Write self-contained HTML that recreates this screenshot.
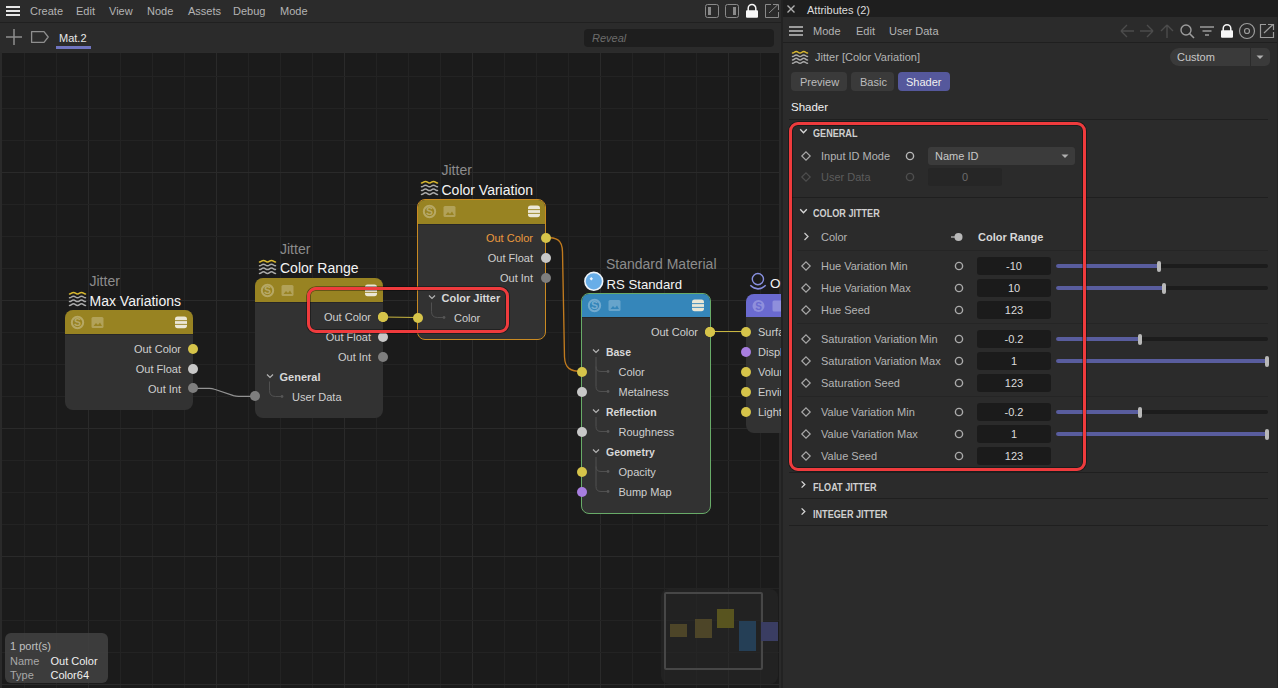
<!DOCTYPE html>
<html><head><meta charset="utf-8"><style>
html,body{margin:0;padding:0;width:1278px;height:688px;overflow:hidden;background:#1b1b1b;}
body{position:relative;font-family:"Liberation Sans", sans-serif;}
.r{position:absolute;}
.t{position:absolute;white-space:nowrap;}
svg.r{overflow:visible}
</style></head><body>
<div class="r" style="left:0px;top:0px;width:781px;height:22px;background:#2b2b2b;"></div>
<div class="r" style="left:0px;top:22px;width:781px;height:1px;background:#202020;"></div>
<div class="r" style="left:0px;top:23px;width:781px;height:29px;background:#2b2b2b;"></div>
<div class="r" style="left:0px;top:52px;width:781px;height:636px;background:#1b1b1b;"></div>
<div class="r" style="left:24px;top:53px;width:1px;height:635px;background:#232323"></div><div class="r" style="left:56px;top:53px;width:1px;height:635px;background:#232323"></div><div class="r" style="left:88px;top:53px;width:1px;height:635px;background:#2a2a2a"></div><div class="r" style="left:120px;top:53px;width:1px;height:635px;background:#232323"></div><div class="r" style="left:152px;top:53px;width:1px;height:635px;background:#232323"></div><div class="r" style="left:184px;top:53px;width:1px;height:635px;background:#232323"></div><div class="r" style="left:216px;top:53px;width:1px;height:635px;background:#2a2a2a"></div><div class="r" style="left:248px;top:53px;width:1px;height:635px;background:#232323"></div><div class="r" style="left:280px;top:53px;width:1px;height:635px;background:#232323"></div><div class="r" style="left:312px;top:53px;width:1px;height:635px;background:#232323"></div><div class="r" style="left:344px;top:53px;width:1px;height:635px;background:#2a2a2a"></div><div class="r" style="left:376px;top:53px;width:1px;height:635px;background:#232323"></div><div class="r" style="left:408px;top:53px;width:1px;height:635px;background:#232323"></div><div class="r" style="left:440px;top:53px;width:1px;height:635px;background:#232323"></div><div class="r" style="left:472px;top:53px;width:1px;height:635px;background:#2a2a2a"></div><div class="r" style="left:504px;top:53px;width:1px;height:635px;background:#232323"></div><div class="r" style="left:536px;top:53px;width:1px;height:635px;background:#232323"></div><div class="r" style="left:568px;top:53px;width:1px;height:635px;background:#232323"></div><div class="r" style="left:600px;top:53px;width:1px;height:635px;background:#2a2a2a"></div><div class="r" style="left:632px;top:53px;width:1px;height:635px;background:#232323"></div><div class="r" style="left:664px;top:53px;width:1px;height:635px;background:#232323"></div><div class="r" style="left:696px;top:53px;width:1px;height:635px;background:#232323"></div><div class="r" style="left:728px;top:53px;width:1px;height:635px;background:#2a2a2a"></div><div class="r" style="left:760px;top:53px;width:1px;height:635px;background:#232323"></div><div class="r" style="left:0;top:76px;width:779px;height:1px;background:#232323"></div><div class="r" style="left:0;top:108px;width:779px;height:1px;background:#232323"></div><div class="r" style="left:0;top:140px;width:779px;height:1px;background:#232323"></div><div class="r" style="left:0;top:172px;width:779px;height:1px;background:#2a2a2a"></div><div class="r" style="left:0;top:204px;width:779px;height:1px;background:#232323"></div><div class="r" style="left:0;top:236px;width:779px;height:1px;background:#232323"></div><div class="r" style="left:0;top:268px;width:779px;height:1px;background:#232323"></div><div class="r" style="left:0;top:300px;width:779px;height:1px;background:#2a2a2a"></div><div class="r" style="left:0;top:332px;width:779px;height:1px;background:#232323"></div><div class="r" style="left:0;top:364px;width:779px;height:1px;background:#232323"></div><div class="r" style="left:0;top:396px;width:779px;height:1px;background:#232323"></div><div class="r" style="left:0;top:428px;width:779px;height:1px;background:#2a2a2a"></div><div class="r" style="left:0;top:460px;width:779px;height:1px;background:#232323"></div><div class="r" style="left:0;top:492px;width:779px;height:1px;background:#232323"></div><div class="r" style="left:0;top:524px;width:779px;height:1px;background:#232323"></div><div class="r" style="left:0;top:556px;width:779px;height:1px;background:#2a2a2a"></div><div class="r" style="left:0;top:588px;width:779px;height:1px;background:#232323"></div><div class="r" style="left:0;top:620px;width:779px;height:1px;background:#232323"></div><div class="r" style="left:0;top:652px;width:779px;height:1px;background:#232323"></div><div class="r" style="left:0;top:684px;width:779px;height:1px;background:#2a2a2a"></div>
<div class="r" style="left:0px;top:52px;width:781px;height:1px;background:#2c2c2c;"></div>
<div class="r" style="left:0px;top:52px;width:2px;height:636px;background:#2a2a2a;"></div>
<div class="r" style="left:779px;top:52px;width:2px;height:636px;background:#2a2a2a;"></div>
<div class="r" style="left:781px;top:0px;width:2px;height:688px;background:#222222;"></div>
<div class="r" style="left:6px;top:6px;width:14px;height:2px;background:#e6e6e6;"></div>
<div class="r" style="left:6px;top:10px;width:14px;height:2px;background:#e6e6e6;"></div>
<div class="r" style="left:6px;top:14px;width:14px;height:2px;background:#e6e6e6;"></div>
<div class="t" style="left:30px;top:5.69px;font-size:11px;line-height:11px;color:#b4b4b4;font-weight:normal;font-style:normal;">Create</div>
<div class="t" style="left:76px;top:5.69px;font-size:11px;line-height:11px;color:#b4b4b4;font-weight:normal;font-style:normal;">Edit</div>
<div class="t" style="left:109px;top:5.69px;font-size:11px;line-height:11px;color:#b4b4b4;font-weight:normal;font-style:normal;">View</div>
<div class="t" style="left:147px;top:5.69px;font-size:11px;line-height:11px;color:#b4b4b4;font-weight:normal;font-style:normal;">Node</div>
<div class="t" style="left:188px;top:5.69px;font-size:11px;line-height:11px;color:#b4b4b4;font-weight:normal;font-style:normal;">Assets</div>
<div class="t" style="left:233px;top:5.69px;font-size:11px;line-height:11px;color:#b4b4b4;font-weight:normal;font-style:normal;">Debug</div>
<div class="t" style="left:280px;top:5.69px;font-size:11px;line-height:11px;color:#b4b4b4;font-weight:normal;font-style:normal;">Mode</div>
<svg class="r" style="left:700px;top:0" width="81" height="22" viewBox="700 0 81 22">
<rect x="705.5" y="4.5" width="13" height="13" rx="2" fill="none" stroke="#8a8a8a" stroke-width="1"/>
<rect x="708" y="7" width="3" height="8" fill="#8a8a8a"/>
<rect x="725.5" y="4.5" width="13" height="13" rx="2" fill="none" stroke="#8a8a8a" stroke-width="1"/>
<rect x="733" y="7" width="3" height="8" fill="#8a8a8a"/>
<path d="M748.2 11 V8.3 a3.8 3.8 0 0 1 7.6 0 V11" fill="none" stroke="#f8f8f8" stroke-width="1.5"/>
<rect x="746" y="10.2" width="12" height="7.6" rx="1" fill="#f8f8f8"/>
<path d="M771 4.5 H765.5 V17.5 H778.5 V12" fill="none" stroke="#8a8a8a" stroke-width="1"/>
<path d="M769 13 L778 4.5 M773 4.5 H778.5 V10" fill="none" stroke="#8a8a8a" stroke-width="1"/>
</svg>
<svg class="r" style="left:0;top:23px" width="60" height="29" viewBox="0 23 60 29">
<path d="M14 29 V45 M6 37 H22" stroke="#8e8e8e" stroke-width="1.5"/>
<path d="M31.6 31.6 H44 L48.2 37 L44 42.4 H31.6 Z" fill="none" stroke="#8e8e8e" stroke-width="1.3" stroke-linejoin="round"/>
</svg>
<div class="t" style="left:59px;top:32.69px;font-size:11px;line-height:11px;color:#e8e8e8;font-weight:normal;font-style:normal;">Mat.2</div>
<div class="r" style="left:56px;top:46px;width:35px;height:3px;background:#7075c0;"></div>
<div class="r" style="left:584px;top:29px;width:190px;height:18px;background:#1e1e1e;border-radius:4px;"></div>
<div class="t" style="left:592px;top:32.69px;font-size:11px;line-height:11px;color:#6c6c6c;font-weight:normal;font-style:italic;">Reveal</div>
<div class="r" style="left:783px;top:0px;width:495px;height:17px;background:#1e1e1e;"></div>
<div class="r" style="left:783px;top:17px;width:495px;height:671px;background:#2b2b2b;"></div>
<div class="r" style="left:783px;top:42px;width:495px;height:1px;background:#1f1f1f;"></div>
<div class="r" style="left:1277px;top:17px;width:1px;height:671px;background:#242424;"></div>
<svg class="r" style="left:783px;top:0" width="20" height="17" viewBox="783 0 20 17">
<path d="M787.5 5.5 L794.5 12.5 M794.5 5.5 L787.5 12.5" stroke="#b0b0b0" stroke-width="1.4"/>
</svg>
<div class="t" style="left:807px;top:4.69px;font-size:11px;line-height:11px;color:#dcdcdc;font-weight:normal;font-style:normal;">Attributes (2)</div>
<div class="r" style="left:789px;top:26px;width:14px;height:2px;background:#9c9c9c;"></div>
<div class="r" style="left:789px;top:30px;width:14px;height:2px;background:#9c9c9c;"></div>
<div class="r" style="left:789px;top:34px;width:14px;height:2px;background:#9c9c9c;"></div>
<div class="t" style="left:813px;top:25.69px;font-size:11px;line-height:11px;color:#b4b4b4;font-weight:normal;font-style:normal;">Mode</div>
<div class="t" style="left:856px;top:25.69px;font-size:11px;line-height:11px;color:#b4b4b4;font-weight:normal;font-style:normal;">Edit</div>
<div class="t" style="left:889px;top:25.69px;font-size:11px;line-height:11px;color:#b4b4b4;font-weight:normal;font-style:normal;">User Data</div>
<svg class="r" style="left:1115px;top:20px" width="163" height="22" viewBox="1115 20 163 22">
<path d="M1121 31 H1134 M1121 31 L1127 25 M1121 31 L1127 37" fill="none" stroke="#4c4c4c" stroke-width="1.4"/>
<path d="M1140 31 H1153 M1153 31 L1147 25 M1153 31 L1147 37" fill="none" stroke="#4c4c4c" stroke-width="1.4"/>
<path d="M1167 25 V38 M1167 25 L1161 31 M1167 25 L1173 31" fill="none" stroke="#4c4c4c" stroke-width="1.4"/>
<circle cx="1186" cy="30" r="5" fill="none" stroke="#9c9c9c" stroke-width="1.4"/>
<path d="M1189.5 33.5 L1194 38" stroke="#9c9c9c" stroke-width="1.6"/>
<path d="M1200 27 H1214 M1202.5 31 H1211.5 M1205 35 H1209" stroke="#9c9c9c" stroke-width="1.7"/>
<path d="M1223.2 31 V28.5 a3.8 3.8 0 0 1 7.6 0 V31" fill="none" stroke="#f8f8f8" stroke-width="1.5"/>
<rect x="1221" y="30.2" width="12" height="7.6" rx="1" fill="#f8f8f8"/>
<circle cx="1247" cy="31" r="7.5" fill="none" stroke="#9c9c9c" stroke-width="1.2"/>
<circle cx="1247" cy="31" r="2.5" fill="none" stroke="#9c9c9c" stroke-width="1.2"/>
<path d="M1266 24.5 H1260.5 V37.5 H1273.5 V32" fill="none" stroke="#9c9c9c" stroke-width="1.2"/>
<path d="M1264 33 L1273 24.5 M1268 24.5 H1273.5 V30" fill="none" stroke="#9c9c9c" stroke-width="1.2"/>
</svg>
<svg class="r" style="left:0;top:0" width="1278" height="688"><path d="M792.50 53.10 C794.38 53.10 794.38 51.50 796.25 51.50 C798.12 51.50 798.12 53.10 800.00 53.10 C801.88 53.10 801.88 51.50 803.75 51.50 C805.62 51.50 805.62 53.10 807.50 53.10" fill="none" stroke="#d8b830" stroke-width="1.5" stroke-linecap="round"/><path d="M792.50 56.50 C794.38 56.50 794.38 54.90 796.25 54.90 C798.12 54.90 798.12 56.50 800.00 56.50 C801.88 56.50 801.88 54.90 803.75 54.90 C805.62 54.90 805.62 56.50 807.50 56.50" fill="none" stroke="#ababab" stroke-width="1.5" stroke-linecap="round"/><path d="M792.50 59.90 C794.38 59.90 794.38 58.30 796.25 58.30 C798.12 58.30 798.12 59.90 800.00 59.90 C801.88 59.90 801.88 58.30 803.75 58.30 C805.62 58.30 805.62 59.90 807.50 59.90" fill="none" stroke="#ababab" stroke-width="1.5" stroke-linecap="round"/><path d="M792.50 63.30 C794.38 63.30 794.38 61.70 796.25 61.70 C798.12 61.70 798.12 63.30 800.00 63.30 C801.88 63.30 801.88 61.70 803.75 61.70 C805.62 61.70 805.62 63.30 807.50 63.30" fill="none" stroke="#ababab" stroke-width="1.5" stroke-linecap="round"/></svg>
<div class="t" style="left:815px;top:51.69px;font-size:11px;line-height:11px;color:#b4b4b4;font-weight:normal;font-style:normal;">Jitter [Color Variation]</div>
<div class="r" style="left:1170px;top:48px;width:100px;height:18px;background:#3a3a3a;border-radius:9px 5px 5px 9px;"></div>
<div class="r" style="left:1250px;top:48px;width:1px;height:18px;background:#2b2b2b;"></div>
<div class="t" style="left:1177px;top:51.69px;font-size:11px;line-height:11px;color:#c8c8c8;font-weight:normal;font-style:normal;">Custom</div>
<svg class="r" style="left:1255px;top:54px" width="10" height="6"><path d="M1.5 1.5 H8.5 L5 5 Z" fill="#b0b0b0"/></svg>
<div class="r" style="left:791px;top:72px;width:56px;height:19px;background:#3a3a3a;border-radius:4px;"></div>
<div class="r" style="left:851px;top:72px;width:43px;height:19px;background:#3a3a3a;border-radius:4px;"></div>
<div class="r" style="left:898px;top:72px;width:52px;height:19px;background:#55589c;border-radius:4px;"></div>
<div class="t" style="left:800px;top:76.69px;font-size:11px;line-height:11px;color:#bdbdbd;font-weight:normal;font-style:normal;">Preview</div>
<div class="t" style="left:860px;top:76.69px;font-size:11px;line-height:11px;color:#bdbdbd;font-weight:normal;font-style:normal;">Basic</div>
<div class="t" style="left:906px;top:76.69px;font-size:11px;line-height:11px;color:#f0f0f0;font-weight:normal;font-style:normal;">Shader</div>
<div class="t" style="left:791px;top:102.27px;font-size:11.5px;line-height:11.5px;color:#f0f0f0;font-weight:normal;font-style:normal;">Shader</div>
<div class="r" style="left:789px;top:119px;width:479px;height:1px;background:#1f1f1f;"></div>
<svg class="r" style="left:0;top:0" width="1278" height="688"><path d="M800.2 129.3 L803.5 132.7 L806.8 129.3" fill="none" stroke="#d8d8d8" stroke-width="1.3"/></svg>
<div class="t" style="left:813px;top:128.84px;font-size:10px;line-height:10px;color:#d0d0d0;font-weight:bold;font-style:normal;transform:scaleX(0.91);transform-origin:0 0;">GENERAL</div>
<svg class="r" style="left:800px;top:150px" width="12" height="12"><path d="M6 1.8 L10.2 6 L6 10.2 L1.8 6 Z" fill="none" stroke="#a8a8a8" stroke-width="1.2"/></svg>
<div class="t" style="left:821px;top:150.69px;font-size:11px;line-height:11px;color:#b4b4b4;font-weight:normal;font-style:normal;">Input ID Mode</div>
<svg class="r" style="left:904px;top:150px" width="12" height="12"><circle cx="6" cy="6" r="3.6" fill="none" stroke="#b8b8b8" stroke-width="1.4"/></svg>
<div class="r" style="left:928px;top:147px;width:147px;height:18px;background:#3b3b3b;border-radius:3px;"></div>
<div class="t" style="left:935px;top:150.69px;font-size:11px;line-height:11px;color:#c8c8c8;font-weight:normal;font-style:normal;">Name ID</div>
<svg class="r" style="left:1060px;top:153px" width="10" height="6"><path d="M1.5 1.5 H8.5 L5 5 Z" fill="#b0b0b0"/></svg>
<svg class="r" style="left:800px;top:171px" width="12" height="12"><path d="M6 1.8 L10.2 6 L6 10.2 L1.8 6 Z" fill="none" stroke="#4e4e4e" stroke-width="1.2"/></svg>
<div class="t" style="left:821px;top:171.69px;font-size:11px;line-height:11px;color:#5c5c5c;font-weight:normal;font-style:normal;">User Data</div>
<svg class="r" style="left:904px;top:171px" width="12" height="12"><circle cx="6" cy="6" r="3.6" fill="none" stroke="#4e4e4e" stroke-width="1.4"/></svg>
<div class="r" style="left:928px;top:168px;width:74px;height:18px;background:#262626;border-radius:3px;"></div>
<div class="t" style="left:965px;transform:translateX(-50%);top:171.69px;font-size:11px;line-height:11px;color:#6c6c6c;font-weight:normal;font-style:normal;">0</div>
<div class="r" style="left:789px;top:197px;width:479px;height:1px;background:#1f1f1f;"></div>
<svg class="r" style="left:0;top:0" width="1278" height="688"><path d="M800.2 209.3 L803.5 212.7 L806.8 209.3" fill="none" stroke="#d8d8d8" stroke-width="1.3"/></svg>
<div class="t" style="left:813px;top:208.84px;font-size:10px;line-height:10px;color:#d0d0d0;font-weight:bold;font-style:normal;transform:scaleX(0.91);transform-origin:0 0;">COLOR JITTER</div>
<svg class="r" style="left:0;top:0" width="1278" height="688"><path d="M804.5 233 L808 236.5 L804.5 240" fill="none" stroke="#c8c8c8" stroke-width="1.3"/></svg>
<div class="t" style="left:821px;top:231.69px;font-size:11px;line-height:11px;color:#b4b4b4;font-weight:normal;font-style:normal;">Color</div>
<svg class="r" style="left:948px;top:231px" width="18" height="12"><path d="M3 6 H8" stroke="#b8b8b8" stroke-width="1.3"/><circle cx="10.5" cy="6" r="4" fill="#b8b8b8"/></svg>
<div class="t" style="left:978px;top:231.69px;font-size:11px;line-height:11px;color:#d8d8d8;font-weight:bold;font-style:normal;">Color Range</div>
<div class="r" style="left:797px;top:250px;width:471px;height:1px;background:#252525;"></div>
<svg class="r" style="left:800px;top:260px" width="12" height="12"><path d="M6 1.8 L10.2 6 L6 10.2 L1.8 6 Z" fill="none" stroke="#a8a8a8" stroke-width="1.2"/></svg>
<div class="t" style="left:821px;top:260.69px;font-size:11px;line-height:11px;color:#b4b4b4;font-weight:normal;font-style:normal;">Hue Variation Min</div>
<svg class="r" style="left:953px;top:260px" width="12" height="12"><circle cx="6" cy="6" r="3.6" fill="none" stroke="#aaaaaa" stroke-width="1.4"/></svg>
<div class="r" style="left:977px;top:257px;width:74px;height:18px;background:#1b1b1b;border-radius:3px;"></div>
<div class="t" style="left:1014px;transform:translateX(-50%);top:260.69px;font-size:11px;line-height:11px;color:#dcdcdc;font-weight:normal;font-style:normal;">-10</div>
<div class="r" style="left:1056px;top:264px;width:212px;height:4px;background:#1c1c1c;border-radius:2px;"></div>
<div class="r" style="left:1056px;top:264px;width:103px;height:4px;background:#595d9e;border-radius:2px 0 0 2px;"></div>
<div class="r" style="left:1157px;top:260.5px;width:4px;height:11px;background:#b8b8b8;border-radius:2px;"></div>
<svg class="r" style="left:800px;top:282px" width="12" height="12"><path d="M6 1.8 L10.2 6 L6 10.2 L1.8 6 Z" fill="none" stroke="#a8a8a8" stroke-width="1.2"/></svg>
<div class="t" style="left:821px;top:282.69px;font-size:11px;line-height:11px;color:#b4b4b4;font-weight:normal;font-style:normal;">Hue Variation Max</div>
<svg class="r" style="left:953px;top:282px" width="12" height="12"><circle cx="6" cy="6" r="3.6" fill="none" stroke="#aaaaaa" stroke-width="1.4"/></svg>
<div class="r" style="left:977px;top:279px;width:74px;height:18px;background:#1b1b1b;border-radius:3px;"></div>
<div class="t" style="left:1014px;transform:translateX(-50%);top:282.69px;font-size:11px;line-height:11px;color:#dcdcdc;font-weight:normal;font-style:normal;">10</div>
<div class="r" style="left:1056px;top:286px;width:212px;height:4px;background:#1c1c1c;border-radius:2px;"></div>
<div class="r" style="left:1056px;top:286px;width:108px;height:4px;background:#595d9e;border-radius:2px 0 0 2px;"></div>
<div class="r" style="left:1162px;top:282.5px;width:4px;height:11px;background:#b8b8b8;border-radius:2px;"></div>
<svg class="r" style="left:800px;top:304px" width="12" height="12"><path d="M6 1.8 L10.2 6 L6 10.2 L1.8 6 Z" fill="none" stroke="#a8a8a8" stroke-width="1.2"/></svg>
<div class="t" style="left:821px;top:304.69px;font-size:11px;line-height:11px;color:#b4b4b4;font-weight:normal;font-style:normal;">Hue Seed</div>
<svg class="r" style="left:953px;top:304px" width="12" height="12"><circle cx="6" cy="6" r="3.6" fill="none" stroke="#aaaaaa" stroke-width="1.4"/></svg>
<div class="r" style="left:977px;top:301px;width:74px;height:18px;background:#1b1b1b;border-radius:3px;"></div>
<div class="t" style="left:1014px;transform:translateX(-50%);top:304.69px;font-size:11px;line-height:11px;color:#dcdcdc;font-weight:normal;font-style:normal;">123</div>
<svg class="r" style="left:800px;top:333px" width="12" height="12"><path d="M6 1.8 L10.2 6 L6 10.2 L1.8 6 Z" fill="none" stroke="#a8a8a8" stroke-width="1.2"/></svg>
<div class="t" style="left:821px;top:333.69px;font-size:11px;line-height:11px;color:#b4b4b4;font-weight:normal;font-style:normal;">Saturation Variation Min</div>
<svg class="r" style="left:953px;top:333px" width="12" height="12"><circle cx="6" cy="6" r="3.6" fill="none" stroke="#aaaaaa" stroke-width="1.4"/></svg>
<div class="r" style="left:977px;top:330px;width:74px;height:18px;background:#1b1b1b;border-radius:3px;"></div>
<div class="t" style="left:1014px;transform:translateX(-50%);top:333.69px;font-size:11px;line-height:11px;color:#dcdcdc;font-weight:normal;font-style:normal;">-0.2</div>
<div class="r" style="left:1056px;top:337px;width:212px;height:4px;background:#1c1c1c;border-radius:2px;"></div>
<div class="r" style="left:1056px;top:337px;width:84px;height:4px;background:#595d9e;border-radius:2px 0 0 2px;"></div>
<div class="r" style="left:1138px;top:333.5px;width:4px;height:11px;background:#b8b8b8;border-radius:2px;"></div>
<svg class="r" style="left:800px;top:355px" width="12" height="12"><path d="M6 1.8 L10.2 6 L6 10.2 L1.8 6 Z" fill="none" stroke="#a8a8a8" stroke-width="1.2"/></svg>
<div class="t" style="left:821px;top:355.69px;font-size:11px;line-height:11px;color:#b4b4b4;font-weight:normal;font-style:normal;">Saturation Variation Max</div>
<svg class="r" style="left:953px;top:355px" width="12" height="12"><circle cx="6" cy="6" r="3.6" fill="none" stroke="#aaaaaa" stroke-width="1.4"/></svg>
<div class="r" style="left:977px;top:352px;width:74px;height:18px;background:#1b1b1b;border-radius:3px;"></div>
<div class="t" style="left:1014px;transform:translateX(-50%);top:355.69px;font-size:11px;line-height:11px;color:#dcdcdc;font-weight:normal;font-style:normal;">1</div>
<div class="r" style="left:1056px;top:359px;width:212px;height:4px;background:#1c1c1c;border-radius:2px;"></div>
<div class="r" style="left:1056px;top:359px;width:211px;height:4px;background:#595d9e;border-radius:2px 0 0 2px;"></div>
<div class="r" style="left:1265px;top:355.5px;width:4px;height:11px;background:#b8b8b8;border-radius:2px;"></div>
<svg class="r" style="left:800px;top:377px" width="12" height="12"><path d="M6 1.8 L10.2 6 L6 10.2 L1.8 6 Z" fill="none" stroke="#a8a8a8" stroke-width="1.2"/></svg>
<div class="t" style="left:821px;top:377.69px;font-size:11px;line-height:11px;color:#b4b4b4;font-weight:normal;font-style:normal;">Saturation Seed</div>
<svg class="r" style="left:953px;top:377px" width="12" height="12"><circle cx="6" cy="6" r="3.6" fill="none" stroke="#aaaaaa" stroke-width="1.4"/></svg>
<div class="r" style="left:977px;top:374px;width:74px;height:18px;background:#1b1b1b;border-radius:3px;"></div>
<div class="t" style="left:1014px;transform:translateX(-50%);top:377.69px;font-size:11px;line-height:11px;color:#dcdcdc;font-weight:normal;font-style:normal;">123</div>
<svg class="r" style="left:800px;top:406px" width="12" height="12"><path d="M6 1.8 L10.2 6 L6 10.2 L1.8 6 Z" fill="none" stroke="#a8a8a8" stroke-width="1.2"/></svg>
<div class="t" style="left:821px;top:406.69px;font-size:11px;line-height:11px;color:#b4b4b4;font-weight:normal;font-style:normal;">Value Variation Min</div>
<svg class="r" style="left:953px;top:406px" width="12" height="12"><circle cx="6" cy="6" r="3.6" fill="none" stroke="#aaaaaa" stroke-width="1.4"/></svg>
<div class="r" style="left:977px;top:403px;width:74px;height:18px;background:#1b1b1b;border-radius:3px;"></div>
<div class="t" style="left:1014px;transform:translateX(-50%);top:406.69px;font-size:11px;line-height:11px;color:#dcdcdc;font-weight:normal;font-style:normal;">-0.2</div>
<div class="r" style="left:1056px;top:410px;width:212px;height:4px;background:#1c1c1c;border-radius:2px;"></div>
<div class="r" style="left:1056px;top:410px;width:84px;height:4px;background:#595d9e;border-radius:2px 0 0 2px;"></div>
<div class="r" style="left:1138px;top:406.5px;width:4px;height:11px;background:#b8b8b8;border-radius:2px;"></div>
<svg class="r" style="left:800px;top:428px" width="12" height="12"><path d="M6 1.8 L10.2 6 L6 10.2 L1.8 6 Z" fill="none" stroke="#a8a8a8" stroke-width="1.2"/></svg>
<div class="t" style="left:821px;top:428.69px;font-size:11px;line-height:11px;color:#b4b4b4;font-weight:normal;font-style:normal;">Value Variation Max</div>
<svg class="r" style="left:953px;top:428px" width="12" height="12"><circle cx="6" cy="6" r="3.6" fill="none" stroke="#aaaaaa" stroke-width="1.4"/></svg>
<div class="r" style="left:977px;top:425px;width:74px;height:18px;background:#1b1b1b;border-radius:3px;"></div>
<div class="t" style="left:1014px;transform:translateX(-50%);top:428.69px;font-size:11px;line-height:11px;color:#dcdcdc;font-weight:normal;font-style:normal;">1</div>
<div class="r" style="left:1056px;top:432px;width:212px;height:4px;background:#1c1c1c;border-radius:2px;"></div>
<div class="r" style="left:1056px;top:432px;width:211px;height:4px;background:#595d9e;border-radius:2px 0 0 2px;"></div>
<div class="r" style="left:1265px;top:428.5px;width:4px;height:11px;background:#b8b8b8;border-radius:2px;"></div>
<svg class="r" style="left:800px;top:450px" width="12" height="12"><path d="M6 1.8 L10.2 6 L6 10.2 L1.8 6 Z" fill="none" stroke="#a8a8a8" stroke-width="1.2"/></svg>
<div class="t" style="left:821px;top:450.69px;font-size:11px;line-height:11px;color:#b4b4b4;font-weight:normal;font-style:normal;">Value Seed</div>
<svg class="r" style="left:953px;top:450px" width="12" height="12"><circle cx="6" cy="6" r="3.6" fill="none" stroke="#aaaaaa" stroke-width="1.4"/></svg>
<div class="r" style="left:977px;top:447px;width:74px;height:18px;background:#1b1b1b;border-radius:3px;"></div>
<div class="t" style="left:1014px;transform:translateX(-50%);top:450.69px;font-size:11px;line-height:11px;color:#dcdcdc;font-weight:normal;font-style:normal;">123</div>
<div class="r" style="left:797px;top:323px;width:471px;height:1px;background:#252525;"></div>
<div class="r" style="left:797px;top:396px;width:471px;height:1px;background:#252525;"></div>
<div class="r" style="left:789px;top:472px;width:479px;height:1px;background:#1f1f1f;"></div>
<svg class="r" style="left:0;top:0" width="1278" height="688"><path d="M801.6 481.4 L804.8 484.5 L801.6 487.6" fill="none" stroke="#d8d8d8" stroke-width="1.3"/></svg>
<div class="t" style="left:813px;top:482.84px;font-size:10px;line-height:10px;color:#d0d0d0;font-weight:bold;font-style:normal;transform:scaleX(0.91);transform-origin:0 0;">FLOAT JITTER</div>
<div class="r" style="left:789px;top:498px;width:479px;height:1px;background:#1f1f1f;"></div>
<svg class="r" style="left:0;top:0" width="1278" height="688"><path d="M801.6 508.4 L804.8 511.5 L801.6 514.6" fill="none" stroke="#d8d8d8" stroke-width="1.3"/></svg>
<div class="t" style="left:813px;top:509.83px;font-size:10px;line-height:10px;color:#d0d0d0;font-weight:bold;font-style:normal;transform:scaleX(0.91);transform-origin:0 0;">INTEGER JITTER</div>
<div class="r" style="left:789px;top:525px;width:479px;height:1px;background:#1f1f1f;"></div>
<div class="r" style="left:789px;top:122px;width:297px;height:349px;box-sizing:border-box;border:3px solid #ef3b3d;border-radius:9px;box-shadow:0 0 0 0.8px rgba(0,0,0,0.45), inset 0 0 0 0.8px rgba(0,0,0,0.45);"></div>
<svg class="r" style="left:0;top:0" width="781" height="688">
<path d="M193 388.4 L209.5 388.4 Q212 388.4 214.5 389.3 L233.5 395.6 Q236 396.3 238.5 396.3 L255 396.3" fill="none" stroke="#939393" stroke-width="1.2"/>
<path d="M383 317 L417.5 317.5" fill="none" stroke="#c8b640" stroke-width="1.2"/>
<path d="M545.5 237.5 C 556 237.5, 562.3 239, 562.5 252 L564.5 357 C 565 368, 570 371.5, 582 371.5" fill="none" stroke="#c07a1e" stroke-width="1.35"/>
<path d="M710 331.5 L746 331.5" fill="none" stroke="#c8b640" stroke-width="1.2"/>
</svg>
<div class="t" style="left:89.5px;top:274.15px;font-size:14px;line-height:14px;color:#8c8c8c;font-weight:normal;font-style:normal;">Jitter</div>
<svg class="r" style="left:0;top:0" width="1278" height="688"><path d="M69.50 294.00 C71.50 294.00 71.50 292.40 73.50 292.40 C75.50 292.40 75.50 294.00 77.50 294.00 C79.50 294.00 79.50 292.40 81.50 292.40 C83.50 292.40 83.50 294.00 85.50 294.00" fill="none" stroke="#d8b830" stroke-width="1.5" stroke-linecap="round"/><path d="M69.50 297.80 C71.50 297.80 71.50 296.20 73.50 296.20 C75.50 296.20 75.50 297.80 77.50 297.80 C79.50 297.80 79.50 296.20 81.50 296.20 C83.50 296.20 83.50 297.80 85.50 297.80" fill="none" stroke="#ababab" stroke-width="1.5" stroke-linecap="round"/><path d="M69.50 301.60 C71.50 301.60 71.50 300.00 73.50 300.00 C75.50 300.00 75.50 301.60 77.50 301.60 C79.50 301.60 79.50 300.00 81.50 300.00 C83.50 300.00 83.50 301.60 85.50 301.60" fill="none" stroke="#ababab" stroke-width="1.5" stroke-linecap="round"/><path d="M69.50 305.40 C71.50 305.40 71.50 303.80 73.50 303.80 C75.50 303.80 75.50 305.40 77.50 305.40 C79.50 305.40 79.50 303.80 81.50 303.80 C83.50 303.80 83.50 305.40 85.50 305.40" fill="none" stroke="#ababab" stroke-width="1.5" stroke-linecap="round"/></svg>
<div class="t" style="left:89.5px;top:294.05px;font-size:14px;line-height:14px;color:#f4f4f4;font-weight:normal;font-style:normal;">Max Variations</div>
<div class="r" style="left:65px;top:310px;width:128px;height:100px;background:#323232;border-radius:8px;overflow:hidden;"><div class="r" style="left:0;top:0;width:100%;height:24px;background:#988322"></div><div class="r" style="left:0;top:24px;width:100%;height:1px;background:rgba(0,0,0,0.22)"></div></div>
<svg class="r" style="left:65px;top:310px" width="128" height="24" viewBox="0 0 128 24">
<circle cx="12.5" cy="12.5" r="5.7" fill="none" stroke="rgba(255,255,255,0.3)" stroke-width="2"/>
<text x="12.5" y="16.3" font-family="Liberation Sans" font-weight="bold" font-size="10.5" fill="rgba(255,255,255,0.32)" text-anchor="middle">S</text>
<rect x="26.5" y="7" width="12" height="11" rx="1.5" fill="rgba(255,255,255,0.25)"/>
<path d="M28.5 16 L31 13 L33 15 L35 12.5 L37 16 Z" fill="#988322"/>
<rect x="110" y="6.6" width="12" height="11.6" rx="2.6" fill="#ebe7d6"/>
<rect x="110" y="10.2" width="12" height="0.9" fill="#988322"/>
<rect x="110" y="13.9" width="12" height="0.9" fill="#988322"/>
</svg>
<div class="t" style="right:1097px;top:343.99px;font-size:11px;line-height:11px;color:#cfcfcf;font-weight:normal;font-style:normal;">Out Color</div>
<div class="r" style="left:188px;top:343.5px;width:10px;height:10px;border-radius:50%;background:#d6c44a"></div>
<div class="t" style="right:1097px;top:363.99px;font-size:11px;line-height:11px;color:#cfcfcf;font-weight:normal;font-style:normal;">Out Float</div>
<div class="r" style="left:188px;top:363.5px;width:10px;height:10px;border-radius:50%;background:#c8c8c8"></div>
<div class="t" style="right:1097px;top:383.89px;font-size:11px;line-height:11px;color:#cfcfcf;font-weight:normal;font-style:normal;">Out Int</div>
<div class="r" style="left:188px;top:383.4px;width:10px;height:10px;border-radius:50%;background:#7e7e7e"></div>
<div class="t" style="left:280px;top:241.65px;font-size:14px;line-height:14px;color:#8c8c8c;font-weight:normal;font-style:normal;">Jitter</div>
<svg class="r" style="left:0;top:0" width="1278" height="688"><path d="M259.50 262.00 C261.50 262.00 261.50 260.40 263.50 260.40 C265.50 260.40 265.50 262.00 267.50 262.00 C269.50 262.00 269.50 260.40 271.50 260.40 C273.50 260.40 273.50 262.00 275.50 262.00" fill="none" stroke="#d8b830" stroke-width="1.5" stroke-linecap="round"/><path d="M259.50 265.80 C261.50 265.80 261.50 264.20 263.50 264.20 C265.50 264.20 265.50 265.80 267.50 265.80 C269.50 265.80 269.50 264.20 271.50 264.20 C273.50 264.20 273.50 265.80 275.50 265.80" fill="none" stroke="#ababab" stroke-width="1.5" stroke-linecap="round"/><path d="M259.50 269.60 C261.50 269.60 261.50 268.00 263.50 268.00 C265.50 268.00 265.50 269.60 267.50 269.60 C269.50 269.60 269.50 268.00 271.50 268.00 C273.50 268.00 273.50 269.60 275.50 269.60" fill="none" stroke="#ababab" stroke-width="1.5" stroke-linecap="round"/><path d="M259.50 273.40 C261.50 273.40 261.50 271.80 263.50 271.80 C265.50 271.80 265.50 273.40 267.50 273.40 C269.50 273.40 269.50 271.80 271.50 271.80 C273.50 271.80 273.50 273.40 275.50 273.40" fill="none" stroke="#ababab" stroke-width="1.5" stroke-linecap="round"/></svg>
<div class="t" style="left:280px;top:261.15px;font-size:14px;line-height:14px;color:#f4f4f4;font-weight:normal;font-style:normal;">Color Range</div>
<div class="r" style="left:255px;top:278px;width:128px;height:140px;background:#323232;border-radius:8px;overflow:hidden;"><div class="r" style="left:0;top:0;width:100%;height:24px;background:#988322"></div><div class="r" style="left:0;top:24px;width:100%;height:1px;background:rgba(0,0,0,0.22)"></div></div>
<svg class="r" style="left:255px;top:278px" width="128" height="24" viewBox="0 0 128 24">
<circle cx="12.5" cy="12.5" r="5.7" fill="none" stroke="rgba(255,255,255,0.3)" stroke-width="2"/>
<text x="12.5" y="16.3" font-family="Liberation Sans" font-weight="bold" font-size="10.5" fill="rgba(255,255,255,0.32)" text-anchor="middle">S</text>
<rect x="26.5" y="7" width="12" height="11" rx="1.5" fill="rgba(255,255,255,0.25)"/>
<path d="M28.5 16 L31 13 L33 15 L35 12.5 L37 16 Z" fill="#988322"/>
<rect x="110" y="6.6" width="12" height="11.6" rx="2.6" fill="#ebe7d6"/>
<rect x="110" y="10.2" width="12" height="0.9" fill="#988322"/>
<rect x="110" y="13.9" width="12" height="0.9" fill="#988322"/>
</svg>
<div class="t" style="right:907px;top:312.49px;font-size:11px;line-height:11px;color:#cfcfcf;font-weight:normal;font-style:normal;">Out Color</div>
<div class="r" style="left:378px;top:312px;width:10px;height:10px;border-radius:50%;background:#d6c44a"></div>
<div class="t" style="right:907px;top:331.99px;font-size:11px;line-height:11px;color:#cfcfcf;font-weight:normal;font-style:normal;">Out Float</div>
<div class="r" style="left:378px;top:331.5px;width:10px;height:10px;border-radius:50%;background:#c8c8c8"></div>
<div class="t" style="right:907px;top:351.99px;font-size:11px;line-height:11px;color:#cfcfcf;font-weight:normal;font-style:normal;">Out Int</div>
<div class="r" style="left:378px;top:351.5px;width:10px;height:10px;border-radius:50%;background:#7e7e7e"></div>
<svg class="r" style="left:266px;top:373px" width="10" height="7"><path d="M1 1.5 L4 4.5 L7 1.5" fill="none" stroke="#b4b4b4" stroke-width="1.2"/></svg>
<div class="t" style="left:279.5px;top:372.49px;font-size:11px;line-height:11px;color:#d8d8d8;font-weight:bold;font-style:normal;">General</div>
<svg class="r" style="left:265px;top:378px" width="24" height="24"><path d="M4.5 3.5 V12.5 Q4.5 18.5 10.5 18.5 H16" fill="none" stroke="#505050" stroke-width="1"/><circle cx="17" cy="18.5" r="1.4" fill="#555"/></svg>
<div class="t" style="left:292px;top:392.49px;font-size:11px;line-height:11px;color:#cfcfcf;font-weight:normal;font-style:normal;">User Data</div>
<div class="r" style="left:250.3px;top:391.3px;width:10px;height:10px;border-radius:50%;background:#7e7e7e"></div>
<div class="t" style="left:441.5px;top:163.15px;font-size:14px;line-height:14px;color:#8c8c8c;font-weight:normal;font-style:normal;">Jitter</div>
<svg class="r" style="left:0;top:0" width="1278" height="688"><path d="M421.50 183.00 C423.50 183.00 423.50 181.40 425.50 181.40 C427.50 181.40 427.50 183.00 429.50 183.00 C431.50 183.00 431.50 181.40 433.50 181.40 C435.50 181.40 435.50 183.00 437.50 183.00" fill="none" stroke="#d8b830" stroke-width="1.5" stroke-linecap="round"/><path d="M421.50 186.80 C423.50 186.80 423.50 185.20 425.50 185.20 C427.50 185.20 427.50 186.80 429.50 186.80 C431.50 186.80 431.50 185.20 433.50 185.20 C435.50 185.20 435.50 186.80 437.50 186.80" fill="none" stroke="#ababab" stroke-width="1.5" stroke-linecap="round"/><path d="M421.50 190.60 C423.50 190.60 423.50 189.00 425.50 189.00 C427.50 189.00 427.50 190.60 429.50 190.60 C431.50 190.60 431.50 189.00 433.50 189.00 C435.50 189.00 435.50 190.60 437.50 190.60" fill="none" stroke="#ababab" stroke-width="1.5" stroke-linecap="round"/><path d="M421.50 194.40 C423.50 194.40 423.50 192.80 425.50 192.80 C427.50 192.80 427.50 194.40 429.50 194.40 C431.50 194.40 431.50 192.80 433.50 192.80 C435.50 192.80 435.50 194.40 437.50 194.40" fill="none" stroke="#ababab" stroke-width="1.5" stroke-linecap="round"/></svg>
<div class="t" style="left:441.5px;top:182.85px;font-size:14px;line-height:14px;color:#f4f4f4;font-weight:normal;font-style:normal;">Color Variation</div>
<div class="r" style="left:417px;top:199px;width:129px;height:141px;background:#323232;border-radius:8px;overflow:hidden;border:1px solid #c98a22;box-sizing:border-box;"><div class="r" style="left:0;top:0;width:100%;height:24px;background:#988322"></div><div class="r" style="left:0;top:24px;width:100%;height:1px;background:rgba(0,0,0,0.22)"></div></div>
<svg class="r" style="left:417px;top:199px" width="129" height="24" viewBox="0 0 129 24">
<circle cx="12.5" cy="12.5" r="5.7" fill="none" stroke="rgba(255,255,255,0.3)" stroke-width="2"/>
<text x="12.5" y="16.3" font-family="Liberation Sans" font-weight="bold" font-size="10.5" fill="rgba(255,255,255,0.32)" text-anchor="middle">S</text>
<rect x="26.5" y="7" width="12" height="11" rx="1.5" fill="rgba(255,255,255,0.25)"/>
<path d="M28.5 16 L31 13 L33 15 L35 12.5 L37 16 Z" fill="#988322"/>
<rect x="111" y="6.6" width="12" height="11.6" rx="2.6" fill="#ebe7d6"/>
<rect x="111" y="10.2" width="12" height="0.9" fill="#988322"/>
<rect x="111" y="13.9" width="12" height="0.9" fill="#988322"/>
</svg>
<div class="t" style="right:745px;top:232.99px;font-size:11px;line-height:11px;color:#ec9a3e;font-weight:normal;font-style:normal;">Out Color</div>
<div class="r" style="left:540.5px;top:232.5px;width:10px;height:10px;border-radius:50%;background:#d6c44a"></div>
<div class="t" style="right:745px;top:252.99px;font-size:11px;line-height:11px;color:#cfcfcf;font-weight:normal;font-style:normal;">Out Float</div>
<div class="r" style="left:540.5px;top:252.5px;width:10px;height:10px;border-radius:50%;background:#c8c8c8"></div>
<div class="t" style="right:745px;top:272.99px;font-size:11px;line-height:11px;color:#cfcfcf;font-weight:normal;font-style:normal;">Out Int</div>
<div class="r" style="left:540.5px;top:272.5px;width:10px;height:10px;border-radius:50%;background:#7e7e7e"></div>
<svg class="r" style="left:428px;top:294px" width="10" height="7"><path d="M1 1.5 L4 4.5 L7 1.5" fill="none" stroke="#b4b4b4" stroke-width="1.2"/></svg>
<div class="t" style="left:441.5px;top:293.49px;font-size:11px;line-height:11px;color:#d8d8d8;font-weight:bold;font-style:normal;">Color Jitter</div>
<svg class="r" style="left:427px;top:299px" width="24" height="24"><path d="M4.5 3.5 V12.5 Q4.5 18.5 10.5 18.5 H16" fill="none" stroke="#505050" stroke-width="1"/><circle cx="17" cy="18.5" r="1.4" fill="#555"/></svg>
<div class="t" style="left:454px;top:313.49px;font-size:11px;line-height:11px;color:#cfcfcf;font-weight:normal;font-style:normal;">Color</div>
<div class="r" style="left:412.5px;top:312.5px;width:10px;height:10px;border-radius:50%;background:#d6c44a"></div>
<div class="r" style="left:378px;top:312px;width:10px;height:10px;border-radius:50%;background:#d6c44a"></div>
<div class="t" style="left:606px;top:256.85px;font-size:14px;line-height:14px;color:#8c8c8c;font-weight:normal;font-style:normal;">Standard Material</div>
<svg class="r" style="left:0;top:0" width="781" height="688"><circle cx="593.8" cy="281.3" r="8.9" fill="#68aee8" stroke="#eef4fa" stroke-width="1.6"/><path d="M591.3 276.9 L593 278.7 L591.3 280.5 L589.6 278.7 Z" fill="#eef6ff"/></svg>
<div class="t" style="left:606.5px;top:277.73px;font-size:13.2px;line-height:13.2px;color:#f4f4f4;font-weight:normal;font-style:normal;">RS Standard</div>
<div class="r" style="left:581px;top:293px;width:130px;height:220.5px;background:#323232;border-radius:8px;overflow:hidden;border:1.8px solid #68ab68;box-sizing:border-box;"><div class="r" style="left:0;top:0;width:100%;height:22.5px;background:#3586ba"></div><div class="r" style="left:0;top:22.5px;width:100%;height:1px;background:rgba(0,0,0,0.22)"></div></div>
<svg class="r" style="left:582px;top:293px" width="128" height="24" viewBox="0 0 128 24">
<circle cx="12.5" cy="12.5" r="5.7" fill="none" stroke="rgba(255,255,255,0.3)" stroke-width="2"/>
<text x="12.5" y="16.3" font-family="Liberation Sans" font-weight="bold" font-size="10.5" fill="rgba(255,255,255,0.32)" text-anchor="middle">S</text>
<rect x="26.5" y="7" width="12" height="11" rx="1.5" fill="rgba(255,255,255,0.25)"/>
<path d="M28.5 16 L31 13 L33 15 L35 12.5 L37 16 Z" fill="#3586ba"/>
<rect x="110" y="6.6" width="12" height="11.6" rx="2.6" fill="#ebe7d6"/>
<rect x="110" y="10.2" width="12" height="0.9" fill="#3586ba"/>
<rect x="110" y="13.9" width="12" height="0.9" fill="#3586ba"/>
</svg>
<div class="t" style="right:580px;top:326.99px;font-size:11px;line-height:11px;color:#cfcfcf;font-weight:normal;font-style:normal;">Out Color</div>
<div class="r" style="left:705px;top:326.5px;width:10px;height:10px;border-radius:50%;background:#d6c44a"></div>
<svg class="r" style="left:592px;top:347.5px" width="10" height="7"><path d="M1 1.5 L4 4.5 L7 1.5" fill="none" stroke="#b4b4b4" stroke-width="1.2"/></svg>
<div class="t" style="left:606px;top:346.99px;font-size:11px;line-height:11px;color:#d8d8d8;font-weight:bold;font-style:normal;transform:scaleX(0.95);transform-origin:0 0;">Base</div>
<div class="t" style="left:618.5px;top:366.99px;font-size:11px;line-height:11px;color:#cfcfcf;font-weight:normal;font-style:normal;">Color</div>
<div class="t" style="left:618.5px;top:386.99px;font-size:11px;line-height:11px;color:#cfcfcf;font-weight:normal;font-style:normal;">Metalness</div>
<svg class="r" style="left:592px;top:407.5px" width="10" height="7"><path d="M1 1.5 L4 4.5 L7 1.5" fill="none" stroke="#b4b4b4" stroke-width="1.2"/></svg>
<div class="t" style="left:606px;top:406.99px;font-size:11px;line-height:11px;color:#d8d8d8;font-weight:bold;font-style:normal;transform:scaleX(0.95);transform-origin:0 0;">Reflection</div>
<div class="t" style="left:618.5px;top:426.99px;font-size:11px;line-height:11px;color:#cfcfcf;font-weight:normal;font-style:normal;">Roughness</div>
<svg class="r" style="left:592px;top:447.5px" width="10" height="7"><path d="M1 1.5 L4 4.5 L7 1.5" fill="none" stroke="#b4b4b4" stroke-width="1.2"/></svg>
<div class="t" style="left:606px;top:446.99px;font-size:11px;line-height:11px;color:#d8d8d8;font-weight:bold;font-style:normal;transform:scaleX(0.95);transform-origin:0 0;">Geometry</div>
<div class="t" style="left:618.5px;top:466.99px;font-size:11px;line-height:11px;color:#cfcfcf;font-weight:normal;font-style:normal;">Opacity</div>
<div class="t" style="left:618.5px;top:486.99px;font-size:11px;line-height:11px;color:#cfcfcf;font-weight:normal;font-style:normal;">Bump Map</div>
<svg class="r" style="left:0;top:0" width="781" height="688">
<path d="M596 357 V386.5 Q596 391.5 601 391.5 H607 M596 366.5 Q596 371.5 601 371.5 H607" fill="none" stroke="#505050" stroke-width="1"/>
<path d="M596 417 V426.5 Q596 431.5 601 431.5 H607" fill="none" stroke="#505050" stroke-width="1"/>
<path d="M596 457 V486.5 Q596 491.5 601 491.5 H607 M596 466.5 Q596 471.5 601 471.5 H607" fill="none" stroke="#505050" stroke-width="1"/>
<g fill="#555"><circle cx="608" cy="371.5" r="1.4"/><circle cx="608" cy="391.5" r="1.4"/><circle cx="608" cy="431.5" r="1.4"/><circle cx="608" cy="471.5" r="1.4"/><circle cx="608" cy="491.5" r="1.4"/></g>
</svg>
<div class="r" style="left:577px;top:366.5px;width:10px;height:10px;border-radius:50%;background:#d6c44a"></div>
<div class="r" style="left:577px;top:386.5px;width:10px;height:10px;border-radius:50%;background:#c8c8c8"></div>
<div class="r" style="left:577px;top:426.5px;width:10px;height:10px;border-radius:50%;background:#c8c8c8"></div>
<div class="r" style="left:577px;top:466.5px;width:10px;height:10px;border-radius:50%;background:#d6c44a"></div>
<div class="r" style="left:577px;top:486.5px;width:10px;height:10px;border-radius:50%;background:#a87ee0"></div>
<div class="r" style="left:0;top:0;width:781px;height:688px;overflow:hidden">
<svg class="r" style="left:0;top:0" width="781" height="688"><circle cx="757.9" cy="279.1" r="5.6" fill="none" stroke="#8890e0" stroke-width="1.4"/><path d="M750.3 285.3 Q758 292.5 765.7 285.3" fill="none" stroke="#8890e0" stroke-width="1.5"/></svg>
<div class="t" style="left:770px;top:277.27px;font-size:13.5px;line-height:13.5px;color:#f4f4f4;font-weight:normal;font-style:normal;">Output</div>
<div class="r" style="left:746px;top:294px;width:128px;height:139px;background:#323232;border-radius:8px;overflow:hidden"><div class="r" style="left:0;top:0;width:128px;height:23px;background:#6a6ad0"></div></div>
<svg class="r" style="left:746px;top:294px" width="40" height="24"><circle cx="12.5" cy="12" r="6" fill="rgba(255,255,255,0.25)"/><text x="12.5" y="16" font-family="Liberation Sans" font-weight="bold" font-size="10" fill="#6a6ad0" text-anchor="middle">S</text><rect x="26.5" y="6.5" width="12" height="11" rx="1.5" fill="rgba(255,255,255,0.25)"/></svg>
<div class="t" style="left:758px;top:326.99px;font-size:11px;line-height:11px;color:#cfcfcf;font-weight:normal;font-style:normal;">Surface</div>
<div class="r" style="left:741px;top:326.5px;width:10px;height:10px;border-radius:50%;background:#d6c44a"></div>
<div class="t" style="left:758px;top:346.99px;font-size:11px;line-height:11px;color:#cfcfcf;font-weight:normal;font-style:normal;">Displacement</div>
<div class="r" style="left:741px;top:346.5px;width:10px;height:10px;border-radius:50%;background:#a87ee0"></div>
<div class="t" style="left:758px;top:366.99px;font-size:11px;line-height:11px;color:#cfcfcf;font-weight:normal;font-style:normal;">Volume</div>
<div class="r" style="left:741px;top:366.5px;width:10px;height:10px;border-radius:50%;background:#d6c44a"></div>
<div class="t" style="left:758px;top:386.99px;font-size:11px;line-height:11px;color:#cfcfcf;font-weight:normal;font-style:normal;">Environment</div>
<div class="r" style="left:741px;top:386.5px;width:10px;height:10px;border-radius:50%;background:#d6c44a"></div>
<div class="t" style="left:758px;top:406.99px;font-size:11px;line-height:11px;color:#cfcfcf;font-weight:normal;font-style:normal;">Light</div>
<div class="r" style="left:741px;top:406.5px;width:10px;height:10px;border-radius:50%;background:#d6c44a"></div>
</div>
<div class="r" style="left:705px;top:326.5px;width:10px;height:10px;border-radius:50%;background:#d6c44a"></div>
<div class="r" style="left:307px;top:287px;width:202px;height:46px;box-sizing:border-box;border:3px solid #ef3b3d;border-radius:9px;box-shadow:0 0 0 0.8px rgba(0,0,0,0.45), inset 0 0 0 0.8px rgba(0,0,0,0.45);"></div>
<div class="r" style="left:661px;top:589px;width:117px;height:95px;background:rgba(40,40,40,0.55);border-radius:8px;"></div>
<div class="r" style="left:664px;top:592px;width:99px;height:78px;box-sizing:border-box;border:2px solid #474747;border-radius:2px"></div>
<div class="r" style="left:670px;top:624px;width:17px;height:13px;background:#4d4528;"></div>
<div class="r" style="left:695px;top:619px;width:17px;height:19px;background:#4d4528;"></div>
<div class="r" style="left:717px;top:609px;width:17px;height:19px;background:#58541f;"></div>
<div class="r" style="left:739px;top:621px;width:17px;height:30px;background:#253f56;"></div>
<div class="r" style="left:761px;top:621.5px;width:17px;height:19px;background:#3a3d62;"></div>
<div class="r" style="left:5px;top:633px;width:103px;height:50px;background:rgba(64,64,64,0.9);border-radius:6px;"></div>
<div class="t" style="left:10px;top:640.69px;font-size:11px;line-height:11px;color:#c0c0c0;font-weight:normal;font-style:normal;">1 port(s)</div>
<div class="t" style="left:10px;top:655.69px;font-size:11px;line-height:11px;color:#a8a8a8;font-weight:normal;font-style:normal;">Name</div>
<div class="t" style="left:50.5px;top:655.69px;font-size:11px;line-height:11px;color:#f0f0f0;font-weight:normal;font-style:normal;">Out Color</div>
<div class="t" style="left:10px;top:669.69px;font-size:11px;line-height:11px;color:#a8a8a8;font-weight:normal;font-style:normal;">Type</div>
<div class="t" style="left:50.5px;top:669.69px;font-size:11px;line-height:11px;color:#f0f0f0;font-weight:normal;font-style:normal;">Color64</div>
</body></html>
